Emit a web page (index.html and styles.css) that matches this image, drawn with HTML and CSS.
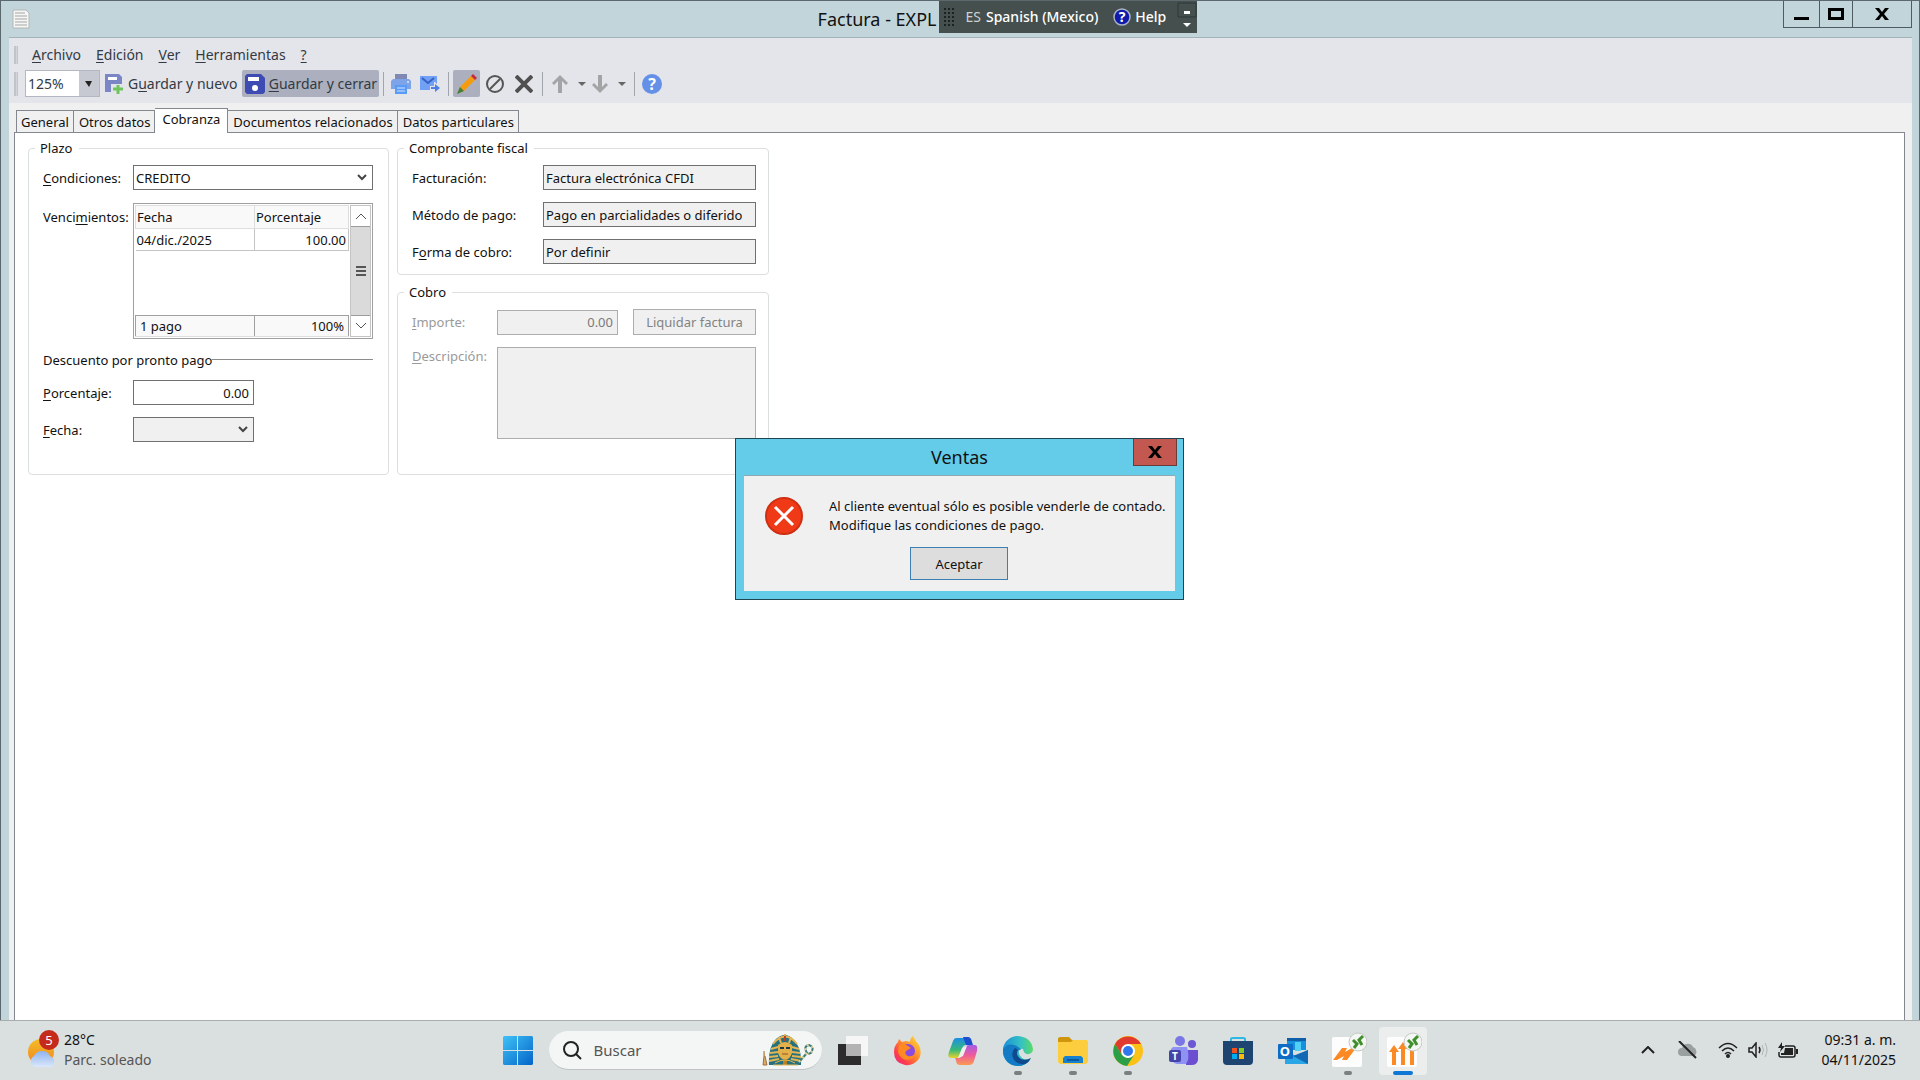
FILE: index.html
```html
<!DOCTYPE html>
<html lang="es-mx">

<head>
    <meta charset="UTF-8">
    <meta name="viewport" content="width=device-width, initial-scale=1.0">
    <title>Factura</title>
    <link rel="stylesheet" href="styles.css">
</head>

<body>
    <main class="window">
        <header class="titlebar">
            <div class="titlebar-left">
                <svg class="doc-icon" width="18" height="20" viewBox="0 0 18 20">
                    <path d="M1 1h13l3 3v15H1z" fill="#f6f6f4" stroke="#b4b7b8" />
                    <path d="M3 4h10M3 7h12M3 10h12M3 13h12M3 16h12" stroke="#a3a6a6" />
                </svg>
                <h1>Factura - EXPL</h1>
            </div>
            <div class="langbar">
                <svg class="grip-dots" width="12" height="20" viewBox="0 0 12 20">
                    <path d="M1 1v19M5 1v19M9 1v19" stroke="#1c2222" stroke-width="2" stroke-dasharray="2 2" />
                </svg>
                <span class="lang-code">ES</span>
                <span class="lang-name">Spanish (Mexico)</span>
                <svg width="18" height="18" viewBox="0 0 18 18">
                    <circle cx="9" cy="9" r="8" fill="#1019a8" stroke="#a9b4c8" stroke-width="1.5" />
                    <text x="9" y="14" text-anchor="middle" class="lang-mark">?</text>
                </svg>
                <span class="lang-help">Help</span>
                <svg class="lang-more" width="20" height="30" viewBox="0 0 20 30">
                    <path d="M1 1h18v14H1z" fill="none" stroke="#2f3838" />
                    <path d="M7 9h6v3H7zM6 21h8l-4 4z" fill="#fff" />
                </svg>
            </div>
            <div class="window-buttons">
                <button class="win-min" aria-label="Minimizar">
                    <svg width="16" height="14" viewBox="0 0 16 14"><path d="M0 10h15v3H0z" /></svg>
                </button>
                <button class="win-max" aria-label="Maximizar">
                    <svg width="16" height="14" viewBox="0 0 16 14"><path d="M0 1h16v12H0zM3 4v6h10V4z" fill-rule="evenodd" /></svg>
                </button>
                <button class="win-close" aria-label="Cerrar">
                    <svg width="14" height="12" viewBox="0 0 14 12"><path d="M0 0h4l3 4 3-4h4L9 6l5 6h-4L7 8l-3 4H0l5-6z" /></svg>
                </button>
            </div>
        </header>

        <div class="client">
            <div class="bars">
                <nav class="menu">
                    <span class="grip"></span>
                    <a href="#"><u>A</u>rchivo</a>
                    <a href="#"><u>E</u>dición</a>
                    <a href="#"><u>V</u>er</a>
                    <a href="#"><u>H</u>erramientas</a>
                    <a href="#"><u>?</u></a>
                </nav>
                <div class="toolbar">
                    <span class="grip"></span>
                    <span class="select zoom">
                        <select aria-label="Zoom">
                            <option>125%</option>
                        </select>
                        <svg width="20" height="25" viewBox="0 0 20 25"><path d="M0 0h20v25H0z" fill="#c7c9d2" /><path d="M6 10h7l-3 6z" fill="#222" /></svg>
                    </span>
                    <button class="tool save-new">
                        <svg width="20" height="20" viewBox="0 0 20 20">
                            <path d="M1 0h14l3 3v15H1z" fill="#7a86c6" />
                            <path d="M4 3h9v3H4z" fill="#fff" />
                            <path d="M7 10h11v10H7z" fill="#e4e5ea" />
                            <path d="M14 11v9M9 15h10" stroke="#6fc45c" stroke-width="3" />
                        </svg>
                        <span>G<u>u</u>ardar y nuevo</span>
                    </button>
                    <button class="tool pressed save-close">
                        <svg width="20" height="20" viewBox="0 0 20 20">
                            <path d="M2 0h14l4 4v14l-2 2H2l-2-2V2z" fill="#3d4bb3" />
                            <path d="M3 3h11v4H3z" fill="#fff" />
                            <circle cx="10" cy="14" r="3" fill="#fff" />
                        </svg>
                        <span><u>G</u>uardar y cerrar</span>
                    </button>
                    <span class="sep"></span>
                    <button class="tool print" aria-label="Imprimir">
                        <svg width="20" height="20" viewBox="0 0 20 20">
                            <path d="M4 0h12v6H4z" fill="#8088b4" />
                            <path d="M2 5h16l2 2v8h-4v-3H4v3H0V7z" fill="#7da3e8" />
                            <path d="M4 11h12v9H4z" fill="#5b9bf8" />
                            <path d="M6 14h8M6 17h8" stroke="#cfe2ff" />
                            <circle cx="17" cy="8" r="1" fill="#d9f0ff" />
                        </svg>
                    </button>
                    <button class="tool mail" aria-label="Enviar por correo">
                        <svg width="20" height="20" viewBox="0 0 20 20">
                            <path d="M0 2h17v8l-2-2h-1v4h-4v4H0z" fill="#72a0f4" />
                            <path d="M2 4l6 5 6-5" fill="none" stroke="#3561c4" stroke-width="2" />
                            <path d="M11 13h4v-3l5 4-5 4v-3h-4z" fill="#4f7fe6" />
                        </svg>
                    </button>
                    <span class="sep"></span>
                    <button class="tool pressed edit" aria-label="Editar">
                        <svg width="22" height="22" viewBox="0 0 22 22">
                            <path d="M4 14L15 3l4 4L8 18z" fill="#f59c0c" />
                            <path d="M15 3l2-2 4 4-2 2z" fill="#c9283e" />
                            <path d="M4 14l4 4-7 3z" fill="#4b7d2c" />
                        </svg>
                    </button>
                    <button class="tool cancel" aria-label="Cancelar">
                        <svg width="18" height="18" viewBox="0 0 18 18">
                            <circle cx="9" cy="9" r="8" fill="none" stroke="#555" stroke-width="2" />
                            <path d="M4 14L14 4" stroke="#555" stroke-width="2" />
                        </svg>
                    </button>
                    <button class="tool delete" aria-label="Eliminar">
                        <svg width="18" height="18" viewBox="0 0 18 18"><path d="M1 1l16 16M17 1L1 17" stroke="#505050" stroke-width="4" /></svg>
                    </button>
                    <span class="sep"></span>
                    <button class="tool arrow" aria-label="Anterior">
                        <svg width="16" height="18" viewBox="0 0 16 18"><path d="M8 0l8 8-2 2-4-4v12H6V6l-4 4-2-2z" fill="#a2a4a6" /></svg>
                        <svg width="8" height="4" viewBox="0 0 8 4"><path d="M0 0h8L4 4z" fill="#666" /></svg>
                    </button>
                    <button class="tool arrow" aria-label="Siguiente">
                        <svg width="16" height="18" viewBox="0 0 16 18"><path d="M8 18l8-8-2-2-4 4V0H6v12L2 8l-2 2z" fill="#a2a4a6" /></svg>
                        <svg width="8" height="4" viewBox="0 0 8 4"><path d="M0 0h8L4 4z" fill="#666" /></svg>
                    </button>
                    <span class="sep"></span>
                    <button class="tool help" aria-label="Ayuda">
                        <svg width="20" height="20" viewBox="0 0 20 20">
                            <circle cx="10" cy="10" r="10" fill="#6490e8" />
                            <text x="10" y="16" text-anchor="middle" class="help-mark">?</text>
                        </svg>
                    </button>
                </div>
            </div>

            <div class="tabs">
                <button class="tab">General</button>
                <button class="tab">Otros datos</button>
                <button class="tab active">Cobranza</button>
                <button class="tab">Documentos relacionados</button>
                <button class="tab">Datos particulares</button>
            </div>

            <section class="panel">
                <fieldset class="plazo">
                    <legend>Plazo</legend>
                    <label for="condiciones"><u>C</u>ondiciones:</label>
                    <span class="select">
                        <select id="condiciones">
                            <option>CREDITO</option>
                        </select>
                        <svg width="20" height="22" viewBox="0 0 20 22"><path d="M6 9l4 4 4-4" fill="none" stroke="#444" stroke-width="2" /></svg>
                    </span>

                    <span class="top" id="vencimientos">Venci<u>m</u>ientos:</span>
                    <div class="list">
                        <table aria-labelledby="vencimientos">
                            <thead>
                                <tr><th>Fecha</th><th>Porcentaje</th></tr>
                            </thead>
                            <tbody>
                                <tr class="due"><td>04/dic./2025</td><td class="num">100.00</td></tr>
                                <tr><td colspan="2"></td></tr>
                            </tbody>
                            <tfoot>
                                <tr><td>1 pago</td><td class="num">100%</td></tr>
                            </tfoot>
                        </table>
                        <div class="scrollbar">
                            <button aria-label="Subir"><svg width="10" height="6" viewBox="0 0 10 6"><path d="M0 6l5-5 5 5" fill="none" stroke="#555" /></svg></button>
                            <div class="thumb"><svg width="10" height="11" viewBox="0 0 10 11"><path d="M0 1h10M0 5h10M0 9h10" stroke="#555" stroke-width="2" /></svg></div>
                            <button aria-label="Bajar"><svg width="10" height="6" viewBox="0 0 10 6"><path d="M0 0l5 5 5-5" fill="none" stroke="#555" /></svg></button>
                        </div>
                    </div>

                    <div class="divider">Descuento por pronto pago</div>

                    <label for="porcentaje"><u>P</u>orcentaje:</label>
                    <input type="text" id="porcentaje" class="num short" value="0.00">

                    <label for="fecha"><u>F</u>echa:</label>
                    <span class="select short off">
                        <select id="fecha" disabled></select>
                        <svg width="20" height="22" viewBox="0 0 20 22"><path d="M6 9l4 4 4-4" fill="none" stroke="#444" stroke-width="2" /></svg>
                    </span>
                </fieldset>

                <div class="column">
                    <fieldset class="fiscal">
                        <legend>Comprobante fiscal</legend>
                        <label for="facturacion">Facturación:</label>
                        <input type="text" id="facturacion" value="Factura electrónica CFDI" readonly>
                        <label for="metodo">Método de pago:</label>
                        <input type="text" id="metodo" value="Pago en parcialidades o diferido" readonly>
                        <label for="forma">F<u>o</u>rma de cobro:</label>
                        <input type="text" id="forma" value="Por definir" readonly>
                    </fieldset>

                    <fieldset class="cobro">
                        <legend>Cobro</legend>
                        <label for="importe"><u>I</u>mporte:</label>
                        <input type="text" id="importe" class="num" value="0.00" disabled>
                        <button disabled>Liquidar factura</button>
                        <label for="descripcion" class="desc"><u>D</u>escripción:</label>
                        <textarea id="descripcion" disabled></textarea>
                    </fieldset>
                </div>
            </section>
        </div>
    </main>

    <div class="dialog" role="alertdialog" aria-labelledby="dialogTitle">
        <h2 id="dialogTitle">Ventas</h2>
        <button class="dialog-close" aria-label="Cerrar">
            <svg width="14" height="12" viewBox="0 0 14 12"><path d="M0 0h4l3 4 3-4h4L9 6l5 6h-4L7 8l-3 4H0l5-6z" /></svg>
        </button>
        <div class="dialog-body">
            <div class="message">
                <svg width="38" height="38" viewBox="0 0 38 38">
                    <circle cx="19" cy="19" r="18" fill="#f03a17" stroke="#cf2f12" stroke-width="2" />
                    <path d="M10 10l18 18M28 10L10 28" stroke="#fff" stroke-width="3" />
                </svg>
                <p>Al cliente eventual sólo es posible venderle de contado.<br>Modifique las condiciones de pago.</p>
            </div>
            <button class="accept">Aceptar</button>
        </div>
    </div>

    <footer class="taskbar">
        <div class="weather">
            <svg width="34" height="40" viewBox="0 0 34 40">
                <defs>
                    <linearGradient id="sun" x1="0" y1="0" x2="0" y2="1"><stop offset="0" stop-color="#f5bd25" /><stop offset="1" stop-color="#ef8420" /></linearGradient>
                    <linearGradient id="cloud" x1="0" y1="0" x2="0" y2="1"><stop offset="0" stop-color="#8fb4ee" /><stop offset="1" stop-color="#dbe7fb" /></linearGradient>
                </defs>
                <circle cx="14" cy="22" r="13" fill="url(#sun)" />
                <path d="M8 37a6 6 0 0 1-1-11 9 9 0 0 1 16 0 6 6 0 0 1 1 11z" fill="url(#cloud)" />
                <circle cx="22" cy="10" r="10" fill="#c42b1c" />
                <text x="22" y="15" text-anchor="middle" class="badge">5</text>
            </svg>
            <div>
                <div>28°C</div>
                <div class="dim">Parc. soleado</div>
            </div>
        </div>

        <div class="apps">
            <button class="app" aria-label="Inicio">
                <svg width="30" height="30" viewBox="0 0 30 30">
                    <defs><linearGradient id="win" x1="0" y1="0" x2="1" y2="1"><stop offset="0" stop-color="#3fc2f7" /><stop offset="1" stop-color="#0464c8" /></linearGradient></defs>
                    <path d="M1 0h13v14H0V1zM15 0h14l1 1v13H15zM0 15h14v14H1l-1-1zM15 15h15v13l-1 1H15z" fill="url(#win)" />
                </svg>
            </button>
            <div class="search">
                <svg width="19" height="19" viewBox="0 0 19 19"><circle cx="8" cy="8" r="7" fill="none" stroke="#222" stroke-width="2" /><path d="M13 13l5 5" stroke="#222" stroke-width="2" /></svg>
                <input type="text" placeholder="Buscar" aria-label="Buscar">
                <!-- faraón con cetro -->
                <svg width="52" height="32" viewBox="0 0 52 32">
                    <path d="M7 31Q6 13 14 5Q23-3 31 5Q40 13 39 31z" fill="#27707d" />
                    <path d="M11 10Q23-5 35 10M9 15l7-2M8 19l8-1M7 23l9-1M7 27l10-2M37 15l-7-2M38 19l-8-1M39 23l-9-1M39 27l-10-2M17 3l2 6M29 3l-2 6M23 0v7" fill="none" stroke="#e2b654" stroke-width="2" />
                    <path d="M16 11q7-6 14 0v8q-2 6-7 7-5-1-7-7z" fill="#e3b04a" />
                    <path d="M18 14h4M24 14h4" stroke="#173a44" stroke-width="2" />
                    <path d="M20 20h6" stroke="#8f5520" />
                    <path d="M21 25h4v6h-4z" fill="#b98126" />
                    <path d="M22 2h2v5h-2z" fill="#bd3a2a" />
                    <path d="M13 29q10-6 20 0M11 31h25" fill="none" stroke="#e2b654" />
                    <path d="M37 28l8-9q-4-7 2-8 6 2 2 8l-3 1" fill="none" stroke="#3a7c78" stroke-width="2" />
                    <path d="M37 28l8-9q-4-7 2-8 6 2 2 8l-3 1" fill="none" stroke="#e6d298" stroke-width="2" stroke-dasharray="2 3" />
                    <path d="M2 17v5l-1 9h4l-2-9" fill="#d2ad6c" stroke="#a3713e" />
                </svg>
            </div>
            <button class="app" aria-label="Vista de tareas">
                <svg width="30" height="30" viewBox="0 0 30 30">
                    <path d="M0 8h23v21H0z" fill="#2c2c2c" />
                    <path d="M8 0h22v20H8z" fill="#f6f6f6" />
                    <path d="M8 8h15v12H8z" fill="#b3b3b3" />
                </svg>
            </button>
            <button class="app" aria-label="Firefox">
                <svg width="30" height="30" viewBox="0 0 30 30">
                    <defs><linearGradient id="fox" x1="1" y1="0" x2="0" y2="1"><stop offset="0" stop-color="#ffe63e" /><stop offset=".45" stop-color="#ff8a2a" /><stop offset=".75" stop-color="#ff3a50" /><stop offset="1" stop-color="#e0218e" /></linearGradient></defs>
                    <path d="M5 6l1-3 3 3 4-1 4 1q0-4 3-6 2 5 6 9 4 9-1 15-5 6-13 5Q1 27 1 16 1 10 5 6z" fill="url(#fox)" />
                    <circle cx="15" cy="15" r="7" fill="#8a4be0" />
                    <path d="M6 9q5-2 9 1l3 2-5 3q-2 3 2 5 5 1 7-3-1 7-8 7-7-1-9-8z" fill="#ff8a22" />
                </svg>
            </button>
            <button class="app" aria-label="Copilot">
                <svg width="30" height="30" viewBox="0 0 30 30">
                    <defs>
                        <linearGradient id="copA" x1="0" y1="0" x2="0" y2="1"><stop offset="0" stop-color="#1c8ee6" /><stop offset=".6" stop-color="#39b978" /><stop offset="1" stop-color="#e8d32c" /></linearGradient>
                        <linearGradient id="copB" x1="0" y1="0" x2="0" y2="1"><stop offset="0" stop-color="#a65be6" /><stop offset=".5" stop-color="#ee5a9a" /><stop offset="1" stop-color="#fb9a52" /></linearGradient>
                    </defs>
                    <path d="M8 2h12q3 0 3 4l-1 3h-4q-3 0-4 4l-2 6q-1 3-4 3H3q-4 0-2-6L5 5q1-3 3-3z" fill="url(#copA)" />
                    <path d="M15 1h5q3 0 4 5l1 3h-7z" fill="#1d50cf" />
                    <path d="M21 9h6q3 0 2 6l-3 10q-1 4-5 4h-9q-4 0-4-5l-1-2h3q4 0 5-4l2-6q1-3 4-3z" fill="url(#copB)" />
                    <path d="M14 12l5-2-4 10-5 2z" fill="#eef0ee" />
                </svg>
            </button>
            <button class="app running" aria-label="Edge">
                <svg width="30" height="30" viewBox="0 0 30 30">
                    <defs><linearGradient id="edge" x1="0" y1="0" x2="1" y2="0"><stop offset="0" stop-color="#1b8fd8" /><stop offset=".6" stop-color="#35c1c4" /><stop offset="1" stop-color="#5adb66" /></linearGradient></defs>
                    <path d="M15 0a15 15 0 1 0 13 22q-5 3-9 0-4-3-3-7 1-3 4-2 1 6 6 5 4-1 4-5Q28 1 15 0z" fill="url(#edge)" />
                    <path d="M0 14q4-7 11-5 6 2 7 5-6-1-6 5 1 9 15 5-5 6-12 6Q1 29 0 14z" fill="#147ac4" />
                    <path d="M12 12q-4 4-2 10 3 7 12 6 4-2 6-6-5 3-10 1-6-4-3-9z" fill="#0f4a8f" />
                </svg>
            </button>
            <button class="app running" aria-label="Explorador">
                <svg width="30" height="30" viewBox="0 0 30 30">
                    <path d="M0 2l2-1h9l3 3h14v5H0z" fill="#cf960d" />
                    <path d="M0 6h13l2-2h14l1 2v20l-2 2H2l-2-2z" fill="#fccd3e" />
                    <path d="M5 27v-5l2-2h16l2 2v5z" fill="#1681cf" />
                    <path d="M9 23h12v2H9z" fill="#0a5a9e" />
                </svg>
            </button>
            <button class="app running" aria-label="Chrome">
                <svg width="30" height="30" viewBox="0 0 30 30">
                    <circle cx="15" cy="15" r="15" fill="#fbc116" />
                    <path d="M15 8h13A15 15 0 0 0 2 8l7 11z" fill="#e03b2e" />
                    <path d="M2 8a15 15 0 0 0 12 22l7-11-6 3-6-3z" fill="#2a9f48" />
                    <circle cx="15" cy="15" r="7" fill="#fff" />
                    <circle cx="15" cy="15" r="5" fill="#2f77ec" />
                </svg>
            </button>
            <button class="app" aria-label="Teams">
                <svg width="30" height="30" viewBox="0 0 30 30">
                    <circle cx="12" cy="5" r="5" fill="#7a76e6" />
                    <circle cx="24" cy="8" r="4" fill="#6a58d4" />
                    <path d="M18 14h12v10q-1 5-6 5h-6z" fill="#6c4fd0" />
                    <path d="M5 11h14q2 8 1 13l-2 4H9q-5-1-6-6V13z" fill="#8d92f4" />
                    <rect x="1" y="14" width="12" height="12" rx="2" fill="#4344a8" />
                    <text x="7" y="24" text-anchor="middle" class="teams-mark">T</text>
                </svg>
            </button>
            <button class="app" aria-label="Tienda">
                <svg width="30" height="30" viewBox="0 0 30 30">
                    <path d="M8 6V3q0-1 2-1h10q2 0 2 1v3" fill="none" stroke="#2fb8e4" stroke-width="2" />
                    <path d="M0 5h30v20q0 4-4 4H4q-4 0-4-4z" fill="#1e4472" />
                    <path d="M9 12h5v5H9z" fill="#f1511b" />
                    <path d="M16 12h5v5h-5z" fill="#80cc28" />
                    <path d="M9 18h5v5H9z" fill="#00adef" />
                    <path d="M16 18h5v5h-5z" fill="#fbbc09" />
                </svg>
            </button>
            <button class="app" aria-label="Outlook">
                <svg width="30" height="30" viewBox="0 0 30 30">
                    <path d="M9 2h19v12H9z" fill="#1490df" />
                    <path d="M9 2h19v3H9z" fill="#0f5fa8" />
                    <path d="M17 6h6v9h-6z" fill="#50d0f4" />
                    <path d="M7 14l11 6 12-6v14H7z" fill="#2aa5e6" />
                    <path d="M30 14v14L15 20z" fill="#1168b4" />
                    <rect x="0" y="8" width="15" height="15" rx="1" fill="#0f6cc4" />
                    <text x="7" y="20" text-anchor="middle" class="outlook-mark">O</text>
                </svg>
            </button>
            <button class="app running" aria-label="Reportes">
                <svg width="38" height="40" viewBox="0 0 38 40">
                    <rect x="3" y="6" width="30" height="30" rx="2" fill="#fdfdfd" />
                    <path d="M4 29l9-12h5l-2 4 7-4h4l-9 12h-5l2-4-7 4z" fill="#fb8a24" />
                    <circle cx="29" cy="11" r="9" fill="#f3f6f2" stroke="#c3c9c5" />
                    <path d="M24 9l4 4-3 4M34 5l-4 4 3 5" fill="none" stroke="#3f8f2c" stroke-width="3" />
                </svg>
            </button>
            <button class="app running current" aria-label="Ventas">
                <svg width="38" height="40" viewBox="0 0 38 40">
                    <rect x="3" y="6" width="30" height="30" rx="2" fill="#fdfdfd" />
                    <path d="M10 34V19M19 34V16M28 34V19" stroke="#fb8a24" stroke-width="4" />
                    <path d="M5 21l5-7 5 7zM14 18l5-7 5 7z" fill="#fb8a24" />
                    <circle cx="29" cy="11" r="9" fill="#f3f6f2" stroke="#c3c9c5" />
                    <path d="M24 9l4 4-3 4M34 5l-4 4 3 5" fill="none" stroke="#3f8f2c" stroke-width="3" />
                </svg>
            </button>
        </div>

        <div class="tray">
            <svg width="14" height="8" viewBox="0 0 14 8"><path d="M1 7l6-6 6 6" fill="none" stroke="#222" stroke-width="2" /></svg>
            <svg class="cloud-off" width="20" height="18" viewBox="0 0 20 18">
                <path d="M4 15a4 4 0 0 1 0-8 6 6 0 0 1 11-1 5 5 0 0 1 1 9z" fill="#9a9f9f" />
                <path d="M1 0l17 17" stroke="#222" stroke-width="2" />
            </svg>
            <svg class="wifi" width="20" height="16" viewBox="0 0 20 16">
                <path d="M1 6q9-9 18 0M4 9q6-6 12 0M7 12q3-3 6 0" fill="none" stroke="#222" stroke-width="1.5" />
                <circle cx="10" cy="14" r="2" fill="#222" />
            </svg>
            <svg class="volume" width="20" height="16" viewBox="0 0 20 16">
                <path d="M1 6h3l4-5v14l-4-5H1z" fill="none" stroke="#222" stroke-width="1.5" />
                <path d="M11 5q2 3 0 6" fill="none" stroke="#222" stroke-width="1.5" />
                <path d="M14 3q3 5 0 10M17 1q4 7 0 14" fill="none" stroke="#b0b4b4" />
            </svg>
            <svg class="battery" width="20" height="16" viewBox="0 0 20 16">
                <path d="M7 4h8q2 0 2 2v7q0 2-2 2H3q-2 0-2-2v-3" fill="none" stroke="#222" stroke-width="1.5" />
                <path d="M7 6h8v7H3v-2h3zM18 7h2v5h-2zM4 0L0 6h3L2 10l5-6H4z" fill="#222" />
            </svg>
            <div class="clock">
                <div>09:31 a. m.</div>
                <div>04/11/2025</div>
            </div>
        </div>
    </footer>
</body>

</html>
```
FILE: styles.css
```css
* {
    box-sizing: border-box;
}

body {
    margin: 0;
    min-height: 100vh;
    display: flex;
    flex-direction: column;
    position: relative;
    font-family: "Noto Sans", "Open Sans", sans-serif;
    font-size: 13px;
    line-height: 18px;
    color: #111;
    background: #c2d5da;
}

svg {
    display: block;
    flex: none;
}

h1,
h2,
p {
    margin: 0;
}

button,
input,
select,
textarea {
    font: inherit;
    color: inherit;
    margin: 0;
}

button {
    display: flex;
    align-items: center;
    justify-content: center;
    padding: 0;
    border: none;
    background: none;
}

a {
    color: inherit;
    text-decoration: none;
}

u {
    text-underline-offset: 2px;
}

/* Ventana */
.window {
    flex: 1;
    display: flex;
    flex-direction: column;
    border: 1px solid #5b686e;
    border-bottom: none;
    padding: 0 7px 0 8px;
}

.titlebar {
    display: grid;
    grid-template-columns: calc(50% - 22px) auto 1fr;
    height: 36px;
}

.titlebar-left {
    display: flex;
    justify-content: space-between;
    padding: 0 2px 0 3px;
    overflow: hidden;
}

.doc-icon {
    margin-top: 8px;
}

.titlebar h1 {
    font-size: 18px;
    font-weight: normal;
    line-height: 36px;
}

.langbar {
    display: flex;
    align-items: center;
    height: 32px;
    padding-left: 5px;
    background: #454f4e;
    color: #fff;
    font-size: 14px;
}

.lang-code {
    margin: 0 5px 0 10px;
    color: #ccd2d2;
}

.lang-name {
    margin-right: 15px;
    font-weight: 500;
}

.lang-help {
    margin: 0 11px 0 4px;
    font-weight: 500;
}

.lang-mark {
    font-size: 14px;
    font-weight: bold;
    fill: #fff;
}

.window-buttons {
    display: flex;
    justify-self: end;
    height: 27px;
    border: 1px solid #4e5c61;
    border-top: none;
}

.window-buttons button {
    border-right: 1px solid #4e5c61;
}

.win-min {
    width: 36px;
}

.win-max {
    width: 33px;
}

.window-buttons .win-close {
    width: 58px;
    border-right: none;
}

.client {
    flex: 1;
    display: flex;
    flex-direction: column;
    border-top: 1px solid #a3b3ba;
    background: #f0f0f0;
}

/* Barras */
.bars {
    padding: 5px 5px 6px;
    background: #e4e5ea;
    color: #333a44;
    font-size: 14px;
}

.menu {
    display: flex;
    align-items: center;
    height: 24px;
    margin-bottom: 3px;
}

.menu a {
    margin-right: 15px;
}

.grip {
    width: 4px;
    height: 18px;
    margin-right: 14px;
    border-left: 2px solid #c2c4cb;
    border-right: 1px solid #c2c4cb;
    background: #d2d4da;
}

.toolbar {
    display: flex;
    align-items: center;
    height: 27px;
}

.toolbar .grip {
    height: 24px;
    margin-right: 7px;
}

.select {
    position: relative;
    display: block;
}

.select select {
    width: 100%;
    height: 25px;
    padding: 0 2px;
    border: 1px solid #707070;
    border-radius: 0;
    appearance: none;
    background: #fff;
    opacity: 1;
}

.select svg {
    position: absolute;
    top: 1px;
    right: 1px;
    pointer-events: none;
}

.zoom {
    width: 75px;
    margin-right: 4px;
}

.select.zoom select {
    height: 27px;
    border-color: #b4b7c2;
}

.select.off select {
    background: #f0f0f0;
}

.tool {
    height: 27px;
    gap: 4px;
}

.tool.pressed {
    background: #abafbe;
    border-radius: 2px;
}

.save-new {
    margin-right: 5px;
}

.save-close {
    width: 137px;
}

.sep {
    width: 1px;
    height: 24px;
    margin: 0 7px 0 4px;
    background: #a3a5ad;
}

.print {
    margin-right: 9px;
}

.mail {
    margin-right: 4px;
}

.edit {
    width: 27px;
    margin: 0 6px 0 -3px;
}

.cancel {
    margin-right: 11px;
}

.delete {
    margin-right: 5px;
}

.arrow {
    gap: 10px;
    padding: 0 4px 0 2px;
}

.help-mark {
    font-size: 16px;
    font-weight: bold;
    fill: #fff;
}

/* Pestañas */
.tabs {
    display: flex;
    align-items: flex-end;
    height: 29px;
    padding-left: 7px;
}

.tab {
    height: 22px;
    padding: 0 4px 0 5px;
    border: 1px solid #828790;
    border-bottom: none;
    border-left-width: 0;
}

.tab:first-child {
    padding-left: 4px;
    border-left-width: 1px;
}

.tab.active {
    height: 25px;
    margin-bottom: -1px;
    padding: 0 7px 4px;
    background: #fff;
    z-index: 1;
}

.panel {
    flex: 1;
    display: flex;
    align-items: flex-start;
    gap: 8px;
    margin: 0 7px 0 5px;
    padding: 6px 13px;
    border: 1px solid #828790;
    border-bottom: none;
    background: #fff;
}

fieldset {
    display: grid;
    align-items: center;
    row-gap: 12px;
    margin: 0;
    min-width: 0;
    padding: 8px 12px 10px 14px;
    border: 1px solid #dcdfe0;
    border-radius: 4px;
}

legend {
    padding: 0 6px 0 5px;
    margin-left: -8px;
}

fieldset input,
textarea {
    width: 100%;
    height: 25px;
    padding: 0 2px;
    border: 1px solid #707070;
    border-radius: 0;
    background: #fff;
}

fieldset input:read-only {
    background: #f0f0f0;
}

.num {
    text-align: right;
}

fieldset input.num {
    padding-right: 4px;
}

.top {
    align-self: start;
    padding-top: 6px;
}

.desc {
    align-self: start;
}

.plazo {
    width: 361px;
    grid-template-columns: 90px 1fr;
    padding-right: 15px;
    padding-bottom: 32px;
}

fieldset .short {
    width: 121px;
}

.list {
    display: flex;
    height: 136px;
    margin-top: 1px;
    padding: 1px;
    border: 1px solid #a0a0a0;
}

.divider {
    grid-column: 1 / -1;
    display: flex;
    align-items: center;
    height: 17px;
}

.divider::after {
    content: "";
    flex: 1;
    height: 1px;
    background: #8c8c8c;
}

table {
    flex: 1;
    height: 132px;
    border-collapse: collapse;
    table-layout: fixed;
}

th,
td {
    padding: 0 2px 0 1px;
    text-align: left;
    font-weight: normal;
}

th:first-child {
    width: 119px;
}

thead th {
    height: 23px;
    border: 1px solid #dedede;
    background: #f9f9f9;
}

.due td {
    height: 22px;
    border: 1px solid #c4c4c4;
    border-left: none;
}

td.num {
    text-align: right;
}

tfoot td {
    height: 21px;
    padding: 0 4px;
    border: 1px solid #a0a0a0;
    border-bottom-color: #dedede;
    background: #f9f9f9;
}

.scrollbar {
    width: 21px;
    display: flex;
    flex-direction: column;
    margin-left: 1px;
    border: 1px solid #c4c4c4;
}

.scrollbar button {
    height: 20px;
}

.thumb {
    flex: 1;
    display: flex;
    align-items: center;
    justify-content: center;
    border-top: 1px solid #9c9c9c;
    border-bottom: 1px solid #9c9c9c;
    background: #dadada;
}

.column {
    width: 372px;
    display: flex;
    flex-direction: column;
    gap: 8px;
}

.fiscal {
    grid-template-columns: 131px 1fr;
}

.cobro {
    grid-template-columns: 85px 121px 1fr;
    padding-bottom: 35px;
    color: #9a9a9a;
}

.cobro legend {
    color: #111;
}

.cobro input,
.cobro textarea {
    border-color: #adadad;
    background: #f0f0f0;
    color: #7a7a7a;
}

.cobro button {
    height: 26px;
    margin-left: 15px;
    border: 1px solid #adadad;
    background: #f0f0f0;
    color: #838383;
}

.cobro textarea {
    grid-column: 2 / -1;
    height: 92px;
    resize: none;
}

/* Mensaje */
.dialog {
    position: absolute;
    top: 438px;
    left: calc(50% - 225px);
    width: 449px;
    padding: 0 8px 8px;
    border: 1px solid #1f4452;
    background: #64cbe9;
}

.dialog h2 {
    font-size: 18px;
    font-weight: normal;
    line-height: 36px;
    text-align: center;
}

.dialog-close {
    position: absolute;
    top: 0;
    right: 6px;
    width: 44px;
    height: 27px;
    border: 1px solid #6b3a3a;
    border-top: none;
    background: #c35850;
}

.dialog-body {
    padding: 21px 8px 11px 21px;
    border-top: 1px solid #8fa9b2;
    background: #f0f0f0;
}

.message {
    display: flex;
    gap: 26px;
    margin-bottom: 12px;
    line-height: 19px;
    white-space: nowrap;
}

.accept {
    width: 98px;
    height: 33px;
    margin-left: 145px;
    border: 1px solid #3c7fb1;
    background: #ddd;
}

/* Barra de tareas */
.taskbar {
    display: grid;
    grid-template-columns: 1fr auto 1fr;
    align-items: center;
    height: 60px;
    border-top: 1px solid #a9adad;
    background: #dadfdf;
    font-size: 14px;
    line-height: 20px;
}

.weather {
    display: flex;
    gap: 3px;
    padding: 0 0 2px 27px;
}

.dim {
    color: #555;
}

.badge {
    font-size: 13px;
    fill: #fff;
}

.apps {
    display: flex;
    align-items: center;
    gap: 7px;
}

.app {
    position: relative;
    width: 48px;
    height: 48px;
}

.app.current {
    border-radius: 4px;
    background: #eceeee;
}

/* indicador de programa abierto */
.running::after {
    content: "";
    position: absolute;
    bottom: 0;
    width: 8px;
    height: 4px;
    border-radius: 2px;
    background: #7b7f7f;
}

.running.current::after {
    width: 20px;
    background: #0f78d4;
}

.search {
    display: flex;
    align-items: center;
    width: 273px;
    height: 39px;
    padding: 0 8px 0 14px;
    border-radius: 20px;
    border-bottom: 1px solid #bfc3c3;
    background: #f4f6f6;
}

.search input {
    flex: 1;
    min-width: 0;
    padding: 0 12px;
    border: none;
    background: none;
    font-size: 15px;
}

.search input::placeholder {
    color: #555;
    opacity: 1;
}

.teams-mark {
    font-size: 10px;
    font-weight: bold;
    fill: #fff;
}

.outlook-mark {
    font-size: 13px;
    font-weight: bold;
    fill: #fff;
}

.tray {
    display: flex;
    align-items: center;
    justify-self: end;
    padding: 0 24px 2px 0;
}

.cloud-off {
    margin: 0 20px 0 23px;
}

.volume {
    margin: 0 10px;
}

.clock {
    margin-left: 24px;
    text-align: right;
}
```
